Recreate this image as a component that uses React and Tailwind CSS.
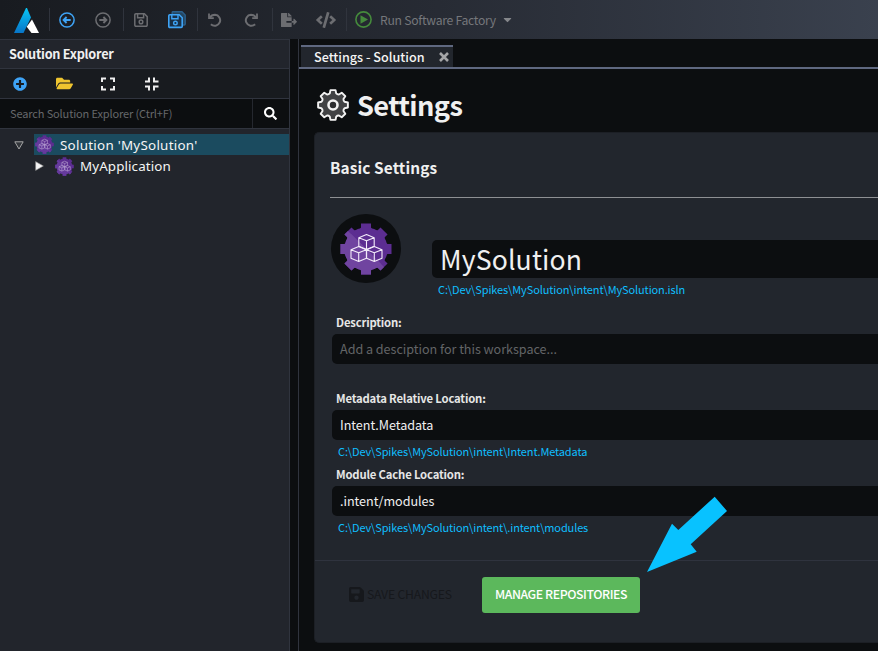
import React from "react";
import { FaCode, FaFileExport, FaPlusCircle, FaFolderOpen, FaSearch, FaSave, FaCaretDown } from "react-icons/fa";

const SANS = "font-['Noto_Sans_CJK_JP','Noto_Sans',sans-serif]";

/* Outline of a cog with eight teeth and rounded valleys, centred on 0,0. */
function cogPath(root, tip, rootHalf, tipHalf) {
  let d = "";
  for (let i = 0; i < 8; i++) {
    const a = (i * Math.PI) / 4;
    const at = (r, o) => `${(r * Math.cos(a + o)).toFixed(2)} ${(r * Math.sin(a + o)).toFixed(2)}`;
    d += `${i ? "L" : "M"}${at(root, -rootHalf)}L${at(tip, -tipHalf)}L${at(tip, tipHalf)}L${at(root, rootHalf)}`;
    d += `Q${at(root - 0.8, Math.PI / 8)} ${at(root, Math.PI / 4 - rootHalf)}`;
  }
  return `${d}Z`;
}

function PurpleCog({ fill, clipPath }) {
  return (
    <g fill={fill} clipPath={clipPath}>
      <circle r="21.6" />
      {[0, 45, 90, 135].map((angle) => (
        <path key={angle} transform={`rotate(${angle})`} d="M-6-20-5-21.5V-25.5H5V-21.5L6-20V20L5 21.5V25.5H-5V21.5L-6 20Z" />
      ))}
    </g>
  );
}

function SolutionIcon({ size, id, faint = false }) {
  return (
    <svg width={size} height={size} viewBox="-26 -26 52 52" className="shrink-0">
      <clipPath id={id}><path d="M-26-26 26 26H-26Z" /></clipPath>
      <PurpleCog fill="#5c2d91" />
      <PurpleCog fill={faint ? "#653a9c" : "#7044a0"} clipPath={`url(#${id})`} />
      <g opacity={faint ? 0.6 : 1} fill="none" stroke="#f3ecfa" strokeWidth={faint ? 1.6 : 1.1} strokeLinejoin="round">
        {[[0.5, -7], [-7.3, 5], [8.3, 5]].map(([x, y]) => (
          <path key={x} transform={`translate(${x} ${y})`} d="M0-7.5 7.7-4.3V4.3L0 7.5-7.7 4.3V-4.3ZM-7.7-4.3 0-1.2 7.7-4.3M0-1.2V7.5" />
        ))}
      </g>
    </svg>
  );
}

function SettingsCog() {
  return (
    <svg width="32" height="32" viewBox="-16 -16 32 32" className="shrink-0">
      <path d={cogPath(12, 15.1, 0.27, 0.17)} fill="#414244" stroke="#f2f2f2" strokeWidth="1.9" strokeLinejoin="round" />
      <circle r="4.5" fill="#2c2d2f" stroke="#f2f2f2" strokeWidth="2.6" />
    </svg>
  );
}

function Logo() {
  return (
    <svg width="25" height="25" viewBox="0 0 25 25">
      <defs>
        <linearGradient id="logoBlue" x1="0" y1="0" x2="0" y2="1">
          <stop offset="0" stopColor="#08c5f5" />
          <stop offset="1" stopColor="#0875c8" />
        </linearGradient>
      </defs>
      <path d="M12 0H13L17 9.5 9.5 25H0Z" fill="url(#logoBlue)" />
      <path d="M18 11.5 25 25H17.5L12.7 18.8Z" fill="#fff" />
    </svg>
  );
}

function CircleArrow({ flip = false, className }) {
  return (
    <svg width="16" height="16" viewBox="0 0 16 16" className={className} fill="none" stroke="currentColor">
      <circle cx="8" cy="8" r="7.1" strokeWidth="1.5" />
      <path d={flip ? "M4.3 8H11M8.4 5 11.4 8 8.4 11" : "M11.7 8H5M7.6 5 4.6 8 7.6 11"} strokeWidth="1.9" />
    </svg>
  );
}

function Floppy({ className }) {
  return (
    <svg width="14" height="14" viewBox="0 0 14 14" className={className} fill="none" stroke="currentColor" strokeWidth="1.5">
      <path d="M1.9.8H10.4L13.2 3.6V12.1A1.1 1.1 0 0 1 12.1 13.2H1.9A1.1 1.1 0 0 1 .8 12.1V1.9A1.1 1.1 0 0 1 1.9.8Z" />
      <path d="M3.6 1V4.7H9.6V1" />
      <circle cx="7" cy="8.9" r="1.8" />
    </svg>
  );
}

function SaveAll() {
  return (
    <svg width="18" height="18" viewBox="0 0 18 18" fill="none">
      <path d="M4.2 3.5V1.5Q4.2.8 5 .8H14L17.2 4V13Q17.2 14 16.2 14H15" fill="#24455f" stroke="#2b608c" strokeWidth="1.4" />
      <path d="M1.8 3.8H11.2L14.2 6.8V15.4A1 1 0 0 1 13.2 16.4H1.8A1 1 0 0 1 .8 15.4V4.8A1 1 0 0 1 1.8 3.8Z" fill="#193047" stroke="#3ea3f5" strokeWidth="1.6" />
      <path d="M3.8 4V7.7H10V4" stroke="#3ea3f5" strokeWidth="1.4" />
      <circle cx="7.4" cy="12" r="1.8" stroke="#3ea3f5" strokeWidth="1.4" />
    </svg>
  );
}

function Turn({ redo = false }) {
  return (
    <svg width="14" height="14" viewBox="0 0 14 14" className="text-[#6c6d71]" fill="none" stroke="currentColor" strokeWidth="2">
      <g transform={redo ? "matrix(-1 0 0 1 14 0)" : undefined}>
        <path d="M1 .4V5.2H5.8" strokeWidth="1.8" />
        <path d="M1.6 4.8C3 2.6 4.8 1.8 7 1.8A5.5 5.5 0 1 1 2.9 11.3" />
      </g>
    </svg>
  );
}

function CornerIcon({ d }) {
  return (
    <svg width="14" height="14" viewBox="0 0 14 14" fill="none" stroke="#eeeeee" strokeWidth="2">
      <path d={d} />
    </svg>
  );
}

function Divider() {
  return <span className="h-[23px] w-px shrink-0 bg-[#30343d]" />;
}

function TopBar() {
  return (
    <header className="flex h-[39px] shrink-0 items-center bg-linear-to-r from-[#181b20] via-[#272b34] to-[#3a414e]">
      <div className="ml-3.5 w-[35px] pt-px"><Logo /></div>
      <Divider />
      <div className="ml-[9px] w-9"><CircleArrow className="text-[#3ea3f5]" /></div>
      <div className="w-[28px]"><CircleArrow flip className="text-[#6c6d71]" /></div>
      <Divider />
      <div className="ml-2.5 w-[34px]"><Floppy className="text-[#6c6d71]" /></div>
      <div className="w-[29px]"><SaveAll /></div>
      <Divider />
      <div className="ml-[10px] w-[36px]"><Turn /></div>
      <div className="w-[28px]"><Turn redo /></div>
      <Divider />
      <div className="ml-2 w-[35px] pt-px"><FaFileExport size={16} color="#6c6d71" /></div>
      <div className="w-[30px] pt-px"><FaCode size={20} color="#6c6d71" /></div>
      <Divider />
      <svg width="17" height="17" viewBox="0 0 17 17" className="ml-2 shrink-0">
        <circle cx="8.5" cy="8.5" r="7.6" fill="none" stroke="#458a3c" strokeWidth="1.6" />
        <path d="M5.5 4.2 13 8.5 5.5 12.8Z" fill="#458a3c" />
      </svg>
      <span className="ml-2 w-[117px] text-[12.2px] leading-5 tracking-[-0.28px] whitespace-nowrap text-[#75777b]">Run Software Factory</span>
      <FaCaretDown size={13} color="#85878b" className="ml-1" />
    </header>
  );
}

function Explorer() {
  return (
    <aside className="flex w-[290px] shrink-0 flex-col border-t border-r border-[#30343e] bg-[#22252c]">
      <h2 className="h-7 pl-[9px] text-[12.7px] leading-[28px] font-bold tracking-[-0.25px] text-[#f0f0f0]">Solution Explorer</h2>
      <div className="flex h-[31px] items-center border-y border-[#30343e] bg-[#181b1f]">
        <FaPlusCircle size={14} color="#3ea3f5" className="ml-[13px]" />
        <FaFolderOpen size={17} color="#efc52f" className="mr-7 ml-[29px]" />
        <CornerIcon d="M5 1.5H1V5M9 1.5H13V5M13 9V12.5H9M5 12.5H1V9" />
        <span className="w-[30px]" />
        <CornerIcon d="M4 .5V4.5H0M9 .5V4.5H13.5M13.5 9.5H9V13.5M0 9.5H4V13.5" />
      </div>
      <div className="flex h-[30px] border-b border-[#30343e] bg-[#0c0e10]">
        <span className="w-[252px] pl-2.5 text-[11px] leading-[29px] tracking-[-0.13px] text-[#66686b]">Search Solution Explorer (Ctrl+F)</span>
        <span className="flex flex-1 items-center border-l border-[#25282f] pl-[11px]">
          <FaSearch size={13} color="#fff" />
        </span>
      </div>
      <div className="mt-[5px] flex h-[21px] font-['Noto_Sans',sans-serif] text-[13.4px] leading-[22px] tracking-[0.26px] text-[#f5f5f5]">
        <span className="flex w-[34px] items-center pt-px pl-3.5">
          <svg width="10" height="9" viewBox="0 0 10 9"><path d="M.8.8H9.2L5 8Z" fill="#33363b" stroke="#a5a5a5" /></svg>
        </span>
        <span className="flex flex-1 items-center gap-1.5 bg-[#1b4b5f] pl-px"><SolutionIcon size={19} id="rootHalf" faint />Solution 'MySolution'</span>
      </div>
      <div className="flex h-[22px] items-center font-['Noto_Sans',sans-serif] text-[13.4px] leading-[22px] tracking-[0.1px] text-[#f5f5f5]">
        <svg width="9" height="10" viewBox="0 0 9 10" className="mr-[11px] ml-[35px]"><path d="M.6.6 8.4 5 .6 9.4Z" fill="#f5f5f5" stroke="#888" strokeWidth=".6" /></svg>
        <SolutionIcon size={19} id="appHalf" faint />
        <span className="ml-1.5">MyApplication</span>
      </div>
    </aside>
  );
}

function Field({ label, value, placeholder, path }) {
  return (
    <div>
      <label className="block h-[22px] pl-1 text-[11.3px] leading-5 font-bold tracking-[-0.18px] text-[#e6e6e6]">{label}</label>
      <div className={`h-[30px] rounded-l-[5px] bg-[#0c0e10] pl-2 text-[12.6px] leading-[30px] tracking-[-0.03px] ${value ? "text-[#f0f0f0]" : "text-[#636567]"}`}>
        {value || placeholder}
      </div>
      <div className="h-6 pl-1.5 text-[11px] leading-[22px] tracking-[-0.13px] text-[#0fbfff]">{path}</div>
    </div>
  );
}

function SettingsPanel() {
  return (
    <section className="ml-[15px] flex h-[511px] flex-col rounded-l-[5px] border border-r-0 border-[#1c1f25] bg-[#22262d]">
      <h2 className="mt-[21px] ml-[15px] h-11 border-b border-[#8e9093] text-[15.4px] leading-[26px] font-bold tracking-[0.1px] text-[#f0f0f0]">Basic Settings</h2>
      <div className="ml-4 flex h-[114px] pt-4">
        <div className="flex h-[69px] w-[70px] items-center justify-center rounded-full bg-[#0c0e10]"><SolutionIcon size={52} id="panelHalf" /></div>
        <div className="ml-[31px] flex-1 pt-[26px]">
          <div className="h-[38px] rounded-l-[5px] bg-[#0c0e10] pl-2 text-[26.6px] leading-[37px] tracking-[0.13px] text-[#f0f0f0]">MySolution</div>
          <div className="pl-1.5 text-[11px] leading-[22px] tracking-[-0.12px] text-[#0fbfff]">C:\Dev\Spikes\MySolution\intent\MySolution.isln</div>
        </div>
      </div>
      <div className="ml-[17px] flex flex-col">
        <Field label="Description:" placeholder="Add a desciption for this workspace..." />
        <Field label="Metadata Relative Location:" value="Intent.Metadata" path="C:\Dev\Spikes\MySolution\intent\Intent.Metadata" />
        <Field label="Module Cache Location:" value=".intent/modules" path="C:\Dev\Spikes\MySolution\intent\.intent\modules" />
      </div>
      <footer className="mt-5 flex flex-1 items-start border-t border-[#2f333e] pt-4">
        <button className="ml-[33px] flex h-9 w-[134px] items-center pb-0.5 text-[12.2px] tracking-[-0.19px] text-[#16181c]">
          <FaSave size={17} className="mr-0.5" /><span className="whitespace-nowrap">SAVE CHANGES</span>
        </button>
        <button className="h-9 w-[158px] rounded-[3px] bg-[#5cb85c] pb-0.5 text-[12.3px] font-medium tracking-[-0.43px] whitespace-nowrap text-white">MANAGE REPOSITORIES</button>
      </footer>
    </section>
  );
}

export default function App() {
  return (
    <div className={`relative flex h-[651px] w-[878px] flex-col overflow-hidden bg-[#0c0e10] ${SANS}`}>
      <TopBar />
      <div className="flex min-h-0 flex-1">
        <Explorer />
        <main className="ml-2 min-w-0 flex-1 border-l border-[#30343e]">
          <div className="flex h-[30px] items-end border-b-2 border-[#5f6880] pl-0.5">
            <div className="flex h-[22px] w-[152px] items-center border-t-2 border-[#5f6880] bg-[#22262d] pl-[13px]">
              <span className="w-[125px] text-[12.6px] leading-5 font-medium whitespace-nowrap text-[#f5f5f5]">Settings - Solution</span>
              <svg width="10" height="10" viewBox="0 0 10 10" stroke="#a5a6a8" strokeWidth="2.6"><path d="M1 1 9 9M9 1 1 9" /></svg>
            </div>
          </div>
          <div className="flex h-[63px] items-center pt-[9px] pl-[18px]">
            <SettingsCog />
            <h1 className="ml-2 pb-[3px] text-[27.2px] leading-8 font-bold tracking-[-0.6px] text-[#f0f0f0]">Settings</h1>
          </div>
          <SettingsPanel />
        </main>
      </div>
      <svg className="absolute top-[496px] left-[646px]" width="82" height="77" viewBox="646 496 82 77">
        <path d="M647 572 672 523.7 678.3 530 714.7 496.7 727 511 690.7 544.3 696.7 551.7Z" fill="#08c2ff" />
      </svg>
    </div>
  );
}
